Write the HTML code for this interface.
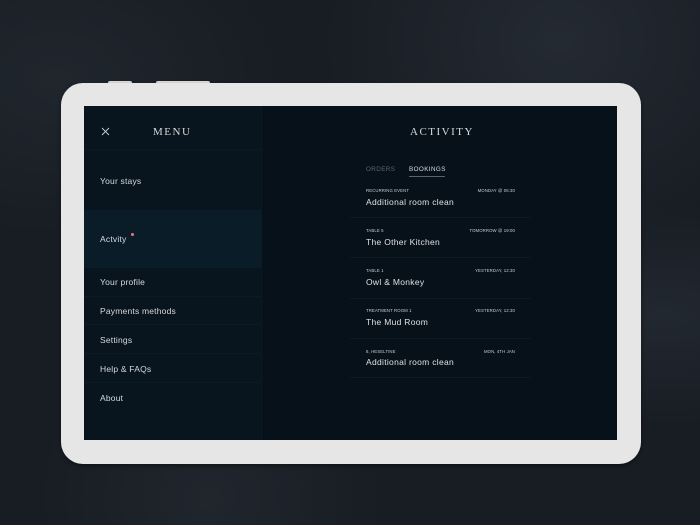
<!DOCTYPE html>
<html><head><meta charset="utf-8"><style>
*{margin:0;padding:0;box-sizing:border-box}
body{width:700px;height:525px;overflow:hidden;position:relative;font-family:"Liberation Sans",sans-serif;
background:radial-gradient(ellipse at 80% 8%,#242a32 0,transparent 30%),radial-gradient(ellipse at 8% 15%,#20262d 0,transparent 25%),radial-gradient(ellipse at 30% 95%,#20262d 0,transparent 25%),radial-gradient(ellipse at 95% 60%,#222830 0,transparent 25%),#181d24;}
.btn{position:absolute;top:81px;height:3px;background:#dcdcdc;border-radius:2px 2px 0 0}
.tab{position:absolute;left:61px;top:83px;width:580px;height:381px;background:#e6e6e6;border-radius:22px;box-shadow:0 2px 4px rgba(0,0,0,.4)}
.scr{position:absolute;left:84px;top:106px;width:533px;height:334px;background:#06111a;overflow:hidden}
.left{position:absolute;left:0;top:0;width:178px;height:334px;background:#08151e;border-right:1px solid #0c1a23}
.sep{position:absolute;height:1px;background:#0c1a24}
.hl{position:absolute;left:0;top:104px;width:178px;height:58px;background:#0a1c28}
.mi{position:absolute;left:16px;font-size:8.5px;color:#d6d9dc;letter-spacing:.2px;line-height:10px}
.ttl{position:absolute;font-family:"Liberation Serif",serif;font-size:11px;color:#d8dadc;letter-spacing:1.5px;line-height:12px}
.lbl{position:absolute;font-size:4.3px;color:#c9cdd0;letter-spacing:.1px;line-height:5px}
.it{position:absolute;left:282px;font-size:8.5px;color:#dfe1e3;letter-spacing:.3px;line-height:10px}
</style></head><body>
<div class="btn" style="left:108px;width:24px"></div>
<div class="btn" style="left:156px;width:54px"></div>
<div class="tab"></div>
<div class="scr">
 <div class="left"></div>
 <div class="hl"></div>
 <div class="sep" style="left:0;width:178px;top:43px"></div>
 <div class="sep" style="left:0;width:178px;top:190px"></div>
 <div class="sep" style="left:0;width:178px;top:218px"></div>
 <div class="sep" style="left:0;width:178px;top:247px"></div>
 <div class="sep" style="left:0;width:178px;top:276px"></div>
 <svg style="position:absolute;left:17px;top:21px" width="9" height="9"><path d="M1 1L8 8M8 1L1 8" stroke="#c8cbce" stroke-width="0.9"/></svg>
 <div class="ttl" style="left:69px;top:20px">MENU</div>
 <div class="mi" style="top:70px">Your stays</div>
 <div class="mi" style="top:128px">Actvity<span style="position:absolute;left:31px;top:-1px;width:3px;height:3px;border-radius:50%;background:#e47a7a"></span></div>
 <div class="mi" style="top:171px">Your profile</div>
 <div class="mi" style="top:200px">Payments methods</div>
 <div class="mi" style="top:229px">Settings</div>
 <div class="mi" style="top:258px">Help &amp; FAQs</div>
 <div class="mi" style="top:287px">About</div>

 <div class="ttl" style="left:326px;top:20px">ACTIVITY</div>
 <div style="position:absolute;left:282px;top:60px;font-size:6.3px;color:#5d666d;letter-spacing:.4px">ORDERS</div>
 <div style="position:absolute;left:325px;top:60px;font-size:6.3px;color:#dadcdf;letter-spacing:.4px">BOOKINGS</div>
 <div style="position:absolute;left:325px;top:70px;width:36px;height:1px;background:#5a646b"></div>

 <div class="lbl" style="left:282px;top:82px">RECURRING EVENT</div><div class="lbl" style="left:360px;width:71px;text-align:right;top:82px">MONDAY @ 06:30</div>
 <div class="it" style="top:91px">Additional room clean</div>
 <div class="sep" style="left:266px;width:181px;top:111px"></div>
 <div class="lbl" style="left:282px;top:122px">TABLE 5</div><div class="lbl" style="left:360px;width:71px;text-align:right;top:122px">TOMORROW @ 19:00</div>
 <div class="it" style="top:131px">The Other Kitchen</div>
 <div class="sep" style="left:266px;width:181px;top:151px"></div>
 <div class="lbl" style="left:282px;top:162px">TABLE 1</div><div class="lbl" style="left:360px;width:71px;text-align:right;top:162px">YESTERDAY, 12:30</div>
 <div class="it" style="top:171px">Owl &amp; Monkey</div>
 <div class="sep" style="left:266px;width:181px;top:192px"></div>
 <div class="lbl" style="left:282px;top:202px">TREATMENT ROOM 1</div><div class="lbl" style="left:360px;width:71px;text-align:right;top:202px">YESTERDAY, 12:30</div>
 <div class="it" style="top:211px">The Mud Room</div>
 <div class="sep" style="left:266px;width:181px;top:232px"></div>
 <div class="lbl" style="left:282px;top:243px">8, HESELTINE</div><div class="lbl" style="left:360px;width:71px;text-align:right;top:243px">MON, 4TH JAN</div>
 <div class="it" style="top:251px">Additional room clean</div>
 <div class="sep" style="left:266px;width:181px;top:271px"></div>
</div>
</body></html>
